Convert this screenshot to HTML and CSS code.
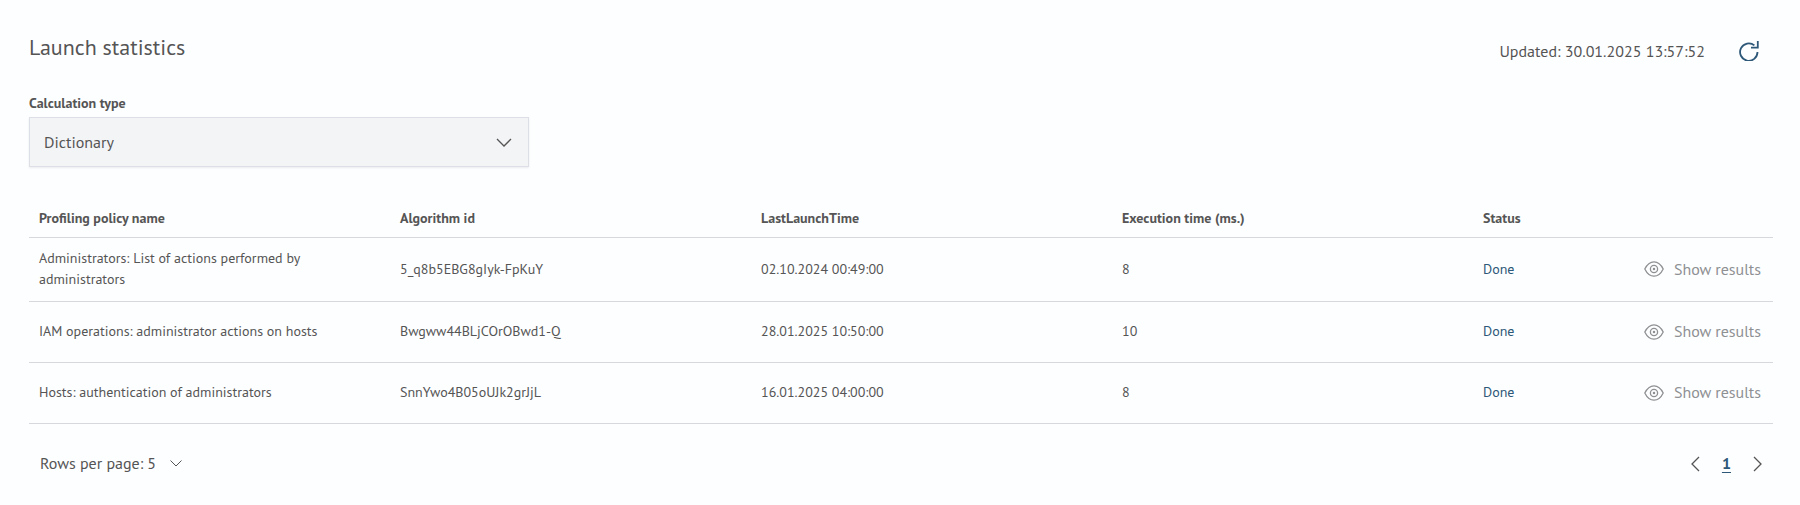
FILE: index.html
```html
<!DOCTYPE html>
<html lang="en">
<head>
    <meta charset="UTF-8">
    <meta name="viewport" content="width=device-width, initial-scale=1.0">
    <title>Launch statistics</title>
    <link rel="stylesheet" href="styles.css">
</head>
<body>
    <!-- Shared icon -->
    <svg class="sprite" aria-hidden="true">
        <symbol id="eye" viewBox="0 0 20 16">
            <path d="M.8 8C3 3.500 6.200 .8 10 .8S17 3.500 19.200 8C17 12.500 13.800 15.200 10 15.200S3 12.500 .8 8Z"/>
            <circle cx="10" cy="8" r="3.600"/>
            <circle cx="10" cy="8" r=".6"/>
        </symbol>
    </svg>

    <header class="header">
        <h1>Launch statistics</h1>
        <div class="updated">
            <span>Updated: 30.01.2025 13:57:52</span>
            <button class="icon-button refresh" aria-label="Refresh">
                <svg width="20" height="20" viewBox="0 0 20 20">
                    <path d="M18.500 11A8.700 8.700 0 1 1 15.400 4.400M18.800 0V6.700H12"/>
                </svg>
            </button>
        </div>
    </header>

    <div class="filter">
        <label for="calc-type">Calculation type</label>
        <div class="select-box">
            <select id="calc-type">
                <option>Dictionary</option>
            </select>
            <svg width="16" height="9" viewBox="0 0 16 9"><path d="M1 1L8 8L15 1"/></svg>
        </div>
    </div>

    <table class="stats">
        <thead>
            <tr>
                <th>Profiling policy name</th>
                <th>Algorithm id</th>
                <th>LastLaunchTime</th>
                <th>Execution time (ms.)</th>
                <th>Status</th>
                <td></td>
            </tr>
        </thead>
        <tbody>
            <tr>
                <td>Administrators: List of actions performed by administrators</td>
                <td>5_q8b5EBG8gIyk-FpKuY</td>
                <td>02.10.2024 00:49:00</td>
                <td>8</td>
                <td class="status">Done</td>
                <td><button class="show"><svg width="20" height="16"><use href="#eye"/></svg>Show results</button></td>
            </tr>
            <tr>
                <td>IAM operations: administrator actions on hosts</td>
                <td>Bwgww44BLjCOrOBwd1-Q</td>
                <td>28.01.2025 10:50:00</td>
                <td>10</td>
                <td class="status">Done</td>
                <td><button class="show"><svg width="20" height="16"><use href="#eye"/></svg>Show results</button></td>
            </tr>
            <tr>
                <td>Hosts: authentication of administrators</td>
                <td>SnnYwo4B05oUJk2grJjL</td>
                <td>16.01.2025 04:00:00</td>
                <td>8</td>
                <td class="status">Done</td>
                <td><button class="show"><svg width="20" height="16"><use href="#eye"/></svg>Show results</button></td>
            </tr>
        </tbody>
    </table>

    <footer class="footer">
        <div class="rows">
            <label for="rows">Rows per page:</label>
            <select id="rows">
                <option>5</option>
            </select>
            <svg width="12" height="7" viewBox="0 0 12 7"><path d="M.5 .5L6 6L11.500 .5"/></svg>
        </div>
        <nav class="pages">
            <button class="icon-button" aria-label="Previous page">
                <svg width="9" height="16" viewBox="0 0 9 16"><path d="M8 1L1 8L8 15"/></svg>
            </button>
            <a href="#">1</a>
            <button class="icon-button" aria-label="Next page">
                <svg width="9" height="16" viewBox="0 0 9 16"><path d="M1 1L8 8L1 15"/></svg>
            </button>
        </nav>
    </footer>
</body>
</html>
```
FILE: styles.css
```css
* {
    box-sizing: border-box;
}

body {
    margin: 0;
    padding: 32px 27px 0 29px;
    font-family: "PT Sans", Lato, sans-serif;
    font-size: 14px;
    line-height: 21px;
    color: #555;
    background: #fdfeff;
}

button,
select {
    font: inherit;
    color: inherit;
    background: none;
    border: none;
    padding: 0;
    margin: 0;
    cursor: pointer;
}

select {
    appearance: none;
}

svg {
    display: block;
    fill: none;
    stroke: currentColor;
    stroke-width: 1.3;
}

.sprite {
    position: absolute;
    width: 0;
    height: 0;
}

.header {
    display: flex;
    justify-content: space-between;
    height: 61px;
}

h1 {
    margin: 0;
    font-size: 22px;
    line-height: 30px;
    font-weight: normal;
}

.updated {
    display: flex;
    align-items: center;
    gap: 28px;
    height: 38px;
    padding-right: 8px;
    font-size: 16px;
}

.icon-button {
    display: flex;
    align-items: center;
    justify-content: center;
    width: 32px;
    height: 32px;
}

.refresh {
    color: #2d5878;
}

.refresh svg {
    stroke-width: 1.8;
}

.filter {
    width: 500px;
    max-width: 100%;
    margin-bottom: 33px;
}

.filter label {
    display: block;
    margin-bottom: 3px;
    font-weight: bold;
}

.select-box {
    display: grid;
    align-items: center;
    height: 50px;
    background: #f3f4f6;
    border: 1px solid #dcdfe5;
    box-shadow: 0 1px 2px rgba(0, 0, 0, 0.08);
}

.select-box select,
.select-box svg {
    grid-area: 1 / 1;
}

.select-box select {
    width: 100%;
    height: 48px;
    padding: 0 48px 0 14px;
    font-size: 16px;
}

.select-box svg {
    justify-self: end;
    margin-right: 16px;
    pointer-events: none;
}

.stats {
    width: 100%;
    table-layout: fixed;
    border-collapse: separate;
    border-spacing: 0;
}

.stats th,
.stats td {
    padding: 10px 10px 11px;
    text-align: left;
    border-bottom: 1px solid #d6d8dd;
}

.stats th {
    width: 20.7%;
    padding: 8px 10px;
}

.stats th:nth-child(5) {
    width: 8%;
}

.stats td:first-child {
    padding-right: 60px;
}

.stats .status {
    color: #2d5878;
}

.show {
    display: flex;
    align-items: center;
    gap: 10px;
    height: 39px;
    margin-left: auto;
    padding-right: 2px;
    font-size: 16px;
    color: #8e9093;
    white-space: nowrap;
}

.footer {
    display: flex;
    align-items: center;
    justify-content: space-between;
    height: 79px;
    padding: 0 0 0 11px;
    font-size: 16px;
}

.rows {
    display: flex;
    align-items: center;
}

.rows select {
    margin: 0 14px 0 4px;
}

.rows svg {
    stroke-width: 1;
}

.pages {
    display: flex;
    align-items: center;
    gap: 10px;
}

.pages a {
    color: #2d5878;
    font-weight: bold;
    text-underline-offset: 3px;
}
```
